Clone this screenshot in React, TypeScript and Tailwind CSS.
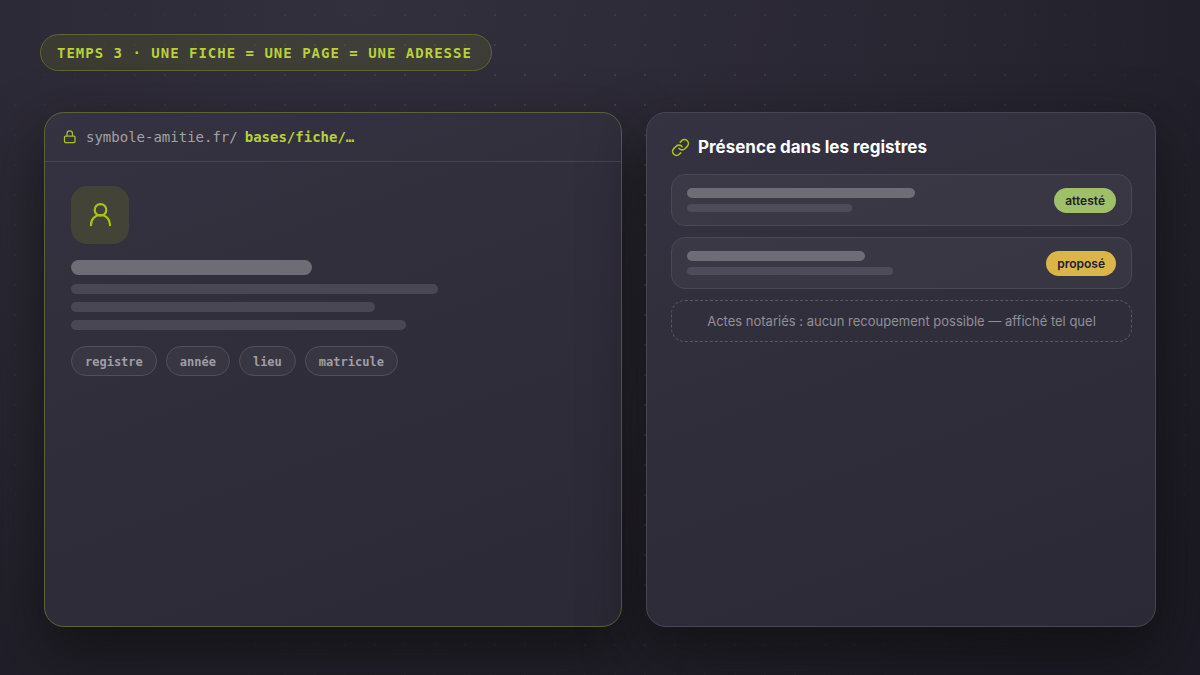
import type { ReactNode } from "react";
import { Link as LinkIcon } from "lucide-react";

function Bar({ className }: { className: string }) {
  return <div className={`rounded-full ${className}`} />;
}

function LockIcon() {
  return (
    <svg viewBox="0 0 14 14" className="h-3.5 w-3.5" fill="none" stroke="currentColor" strokeWidth="1.25" strokeLinejoin="round" aria-hidden="true">
      <rect x="1.5" y="6" width="10.500" height="6.500" rx="1" />
      <path d="M4 6V3.700a2.750 2.750 0 0 1 5.500 0V6" />
    </svg>
  );
}

function UserIcon() {
  return (
    <svg viewBox="0 0 28 28" className="h-7 w-7" fill="none" stroke="currentColor" strokeWidth="2.200" strokeLinecap="round" aria-hidden="true">
      <circle cx="14.500" cy="8.900" r="5.800" />
      <path d="M5 24.200v-.7a9.500 9.500 0 0 1 19 0v.7" />
    </svg>
  );
}

function Panel({ className, children }: { className: string; children: ReactNode }) {
  return (
    <section
      className={`flex min-w-0 flex-col rounded-[20px] border bg-linear-160 from-[#353241] to-[#2b2935] shadow-[0_24px_60px_rgba(15,15,15,0.8)] ${className}`}
    >
      {children}
    </section>
  );
}

function RegisterRow({
  title,
  subtitle,
  status,
  statusClass,
}: {
  title: string;
  subtitle: string;
  status: string;
  statusClass: string;
}) {
  return (
    <li className="flex h-[52px] items-center justify-between gap-4 rounded-[14px] border border-[#4a4855] bg-white/4 px-[15px]">
      <div className="flex min-w-0 flex-1 flex-col gap-1.5">
        <Bar className={`h-2.5 bg-[#6e6c75] ${title}`} />
        <Bar className={`h-2 bg-[#4f4c5a] ${subtitle}`} />
      </div>
      <span className={`rounded-full px-[11px] py-1 text-[12px] leading-[17px] font-semibold text-[#23212b] ${statusClass}`}>
        {status}
      </span>
    </li>
  );
}

const tags = ["registre", "année", "lieu", "matricule"];

export default function App() {
  return (
    <main className="relative isolate flex min-h-screen flex-col bg-[radial-gradient(ellipse_at_30%_0%,#33303e_0%,#282631_50%,#1c1a24_90%)] px-10 pt-[34px] pb-12 font-['Inter',sans-serif]">
      {/* dotted backdrop, fading out towards the corners */}
      <div className="absolute inset-0 -z-10 bg-[radial-gradient(circle,rgba(255,255,255,0.1)_1px,transparent_1.5px)] mask-[radial-gradient(ellipse_at_50%_45%,black_35%,transparent_88%)] bg-size-[30px_30px]" />

      <h1 className="self-start rounded-full border border-[#5f6634] bg-[#a9c21d]/11 pt-[9px] pr-[19px] pb-[7px] pl-4 font-['DejaVu_Sans_Mono',monospace] text-[14px] leading-[19px] font-bold tracking-[1px] text-[#b9d03a] uppercase">
        Temps 3 · une fiche = une page = une adresse
      </h1>

      <div className="mx-1 mt-[41px] grid flex-1 grid-cols-[17fr_15fr] gap-6">
        <Panel className="border-[#5d6335]">
          <div className="flex h-[49px] items-center border-b border-[#474552] pl-[18px] font-['DejaVu_Sans_Mono',monospace] text-[14px]">
            <span className="text-[#a9c21d]">
              <LockIcon />
            </span>
            <span className="ml-[9px] text-[#a3a1a8]">symbole-amitie.fr/</span>
            <span className="ml-[7px] font-bold text-[#b9d03a]">bases/fiche/…</span>
          </div>

          <div className="px-[26px] pt-6">
            <div className="flex h-[58px] w-[58px] items-center justify-center rounded-2xl bg-[#434338] text-[#a9c21d]">
              <UserIcon />
            </div>
            <Bar className="mt-4 h-[15px] w-[46%] bg-[#6e6c75]" />
            <div className="mt-[9px] flex flex-col gap-2">
              <Bar className="h-2.5 w-[70%] bg-[#4a4755]" />
              <Bar className="h-2.5 w-[58%] bg-[#4a4755]" />
              <Bar className="h-2.5 w-[64%] bg-[#4a4755]" />
            </div>
            <ul className="mt-4 flex flex-wrap gap-[9px]">
              {tags.map((tag) => (
                <li
                  key={tag}
                  className="rounded-full border border-[#514f5b] bg-white/4 px-[13px] pt-[7px] pb-[5px] font-['DejaVu_Sans_Mono',monospace] text-[12px] leading-4 font-bold text-[#a09ea5]"
                >
                  {tag}
                </li>
              ))}
            </ul>
          </div>
        </Panel>

        <Panel className="border-[#484653] pt-[22px] pr-[23px] pl-6">
          <h2 className="flex items-center gap-2 text-[17px] leading-6 font-bold text-white">
            <LinkIcon className="h-[19px] w-[19px] text-[#a9c21d]" aria-hidden="true" />
            Présence dans les registres
          </h2>
          <ul className="mt-[15px] flex flex-col gap-[11px]">
            <RegisterRow title="w-[65%]" subtitle="w-[47%]" status="attesté" statusClass="bg-[#9fc069]" />
            <RegisterRow title="w-[52%]" subtitle="w-[60%]" status="proposé" statusClass="bg-[#dbb44a]" />
          </ul>
          <p className="mt-[11px] rounded-[14px] border border-dashed border-[#5a5863] px-4 py-2.5 text-center text-[13px] leading-5 text-[#918f98]">
            Actes notariés : aucun recoupement possible — affiché tel quel
          </p>
        </Panel>
      </div>
    </main>
  );
}
